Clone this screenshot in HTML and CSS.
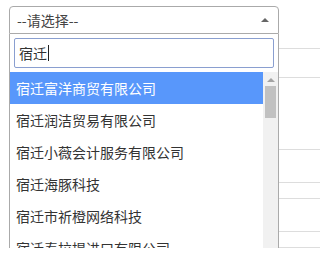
FILE: index.html
```html
<!DOCTYPE html>
<html lang="zh-CN">
<head>
<meta charset="utf-8">
<title>select</title>
<link rel="stylesheet" href="styles.css">
</head>
<body>
<div class="page">
  <div class="field">
    <div class="choice">
      <span class="placeholder">--请选择--</span>
      <span class="arrow"></span>
    </div>
    <div class="drop">
      <div class="search"><span class="query">宿迁</span><span class="caret"></span></div>
      <div class="results">
        <ul class="options">
          <li class="opt active">宿迁富洋商贸有限公司</li>
          <li class="opt">宿迁润洁贸易有限公司</li>
          <li class="opt">宿迁小薇会计服务有限公司</li>
          <li class="opt">宿迁海豚科技</li>
          <li class="opt">宿迁市祈橙网络科技</li>
          <li class="opt">宿迁泰拉提进口有限公司</li>
        </ul>
        <div class="scrollbar">
          <span class="sb-up"></span>
          <span class="sb-thumb"></span>
          <span class="sb-fill"></span>
          <span class="sb-down"></span>
        </div>
      </div>
    </div>
  </div>
  <div class="side">
    <div class="row r1"></div>
    <div class="row r2"></div>
    <div class="row r3"></div>
    <div class="row r4"></div>
    <div class="row r5"></div>
    <div class="row r6"></div>
    <div class="row r7"></div>
  </div>
</div>
</body>
</html>
```
FILE: styles.css
```css
html, body {
  margin: 0;
  padding: 0;
  background: #fff;
}
body {
  font-family: "Noto Sans CJK SC", "Noto Sans", sans-serif;
  font-size: 14px;
  color: #333;
}
.page {
  display: flex;
  padding: 6px 0 0 9px;
}
.field {
  position: relative;
  width: 270px;
  flex: none;
}
.choice {
  box-sizing: border-box;
  height: 28px;
  border: 1px solid #aaa;
  border-radius: 4px 4px 0 0;
  background: #fff;
  display: flex;
  align-items: center;
  padding: 0 8px 0 7px;
}
.placeholder {
  flex: 1;
  color: #444;
  line-height: 20px;
}
.arrow {
  width: 0;
  height: 0;
  border-left: 4px solid transparent;
  border-right: 4px solid transparent;
  border-bottom: 4px solid #666;
  margin-right: 1px;
  margin-top: -1px;
}
.drop {
  position: absolute;
  top: 28px;
  left: 0;
  width: 270px;
  box-sizing: border-box;
  border: 1px solid #aaa;
  border-top: 0;
  background: #fff;
  z-index: 5;
}
.search {
  box-sizing: border-box;
  height: 30px;
  margin: 4px 4px 4px 4px;
  border: 1px solid #8a9fd0;
  border-radius: 2px;
  display: flex;
  align-items: center;
  padding: 0 0 0 4px;
  color: #333;
}
.query {
  line-height: 20px;
}
.caret {
  width: 1px;
  height: 16px;
  background: #222;
  margin-left: 1px;
}
.results {
  display: flex;
  height: 198px;
  overflow: hidden;
}
.options {
  list-style: none;
  margin: 0;
  padding: 0;
  width: 253px;
  flex: none;
}
.opt {
  height: 32px;
  line-height: 32px;
  padding-left: 6px;
  white-space: nowrap;
  color: #333;
}
.opt.active {
  background: #5897fb;
  color: #fff;
}
.scrollbar {
  width: 15px;
  flex: none;
  background: #f1f1f1;
  display: flex;
  flex-direction: column;
  align-items: center;
}
.sb-up {
  margin-top: 6px;
  width: 0;
  height: 0;
  border-left: 4px solid transparent;
  border-right: 4px solid transparent;
  border-bottom: 4px solid #a3a3a3;
}
.sb-thumb {
  margin-top: 4px;
  width: 11px;
  height: 32px;
  background: #c1c1c1;
}
.sb-fill {
  flex: 1;
}
.sb-down {
  margin-bottom: 4px;
  width: 0;
  height: 0;
  border-left: 4px solid transparent;
  border-right: 4px solid transparent;
  border-top: 4px solid #505050;
}
.side {
  flex: 1;
}
.row {
  border-bottom: 1px solid #ddd;
}
.r1 { height: 42px; }
.r2 { height: 28px; }
.r3 { height: 71px; }
.r4 { height: 32px; }
.r5 { height: 15px; }
.r6 { height: 32px; }
.r7 { height: 15px; }
```
